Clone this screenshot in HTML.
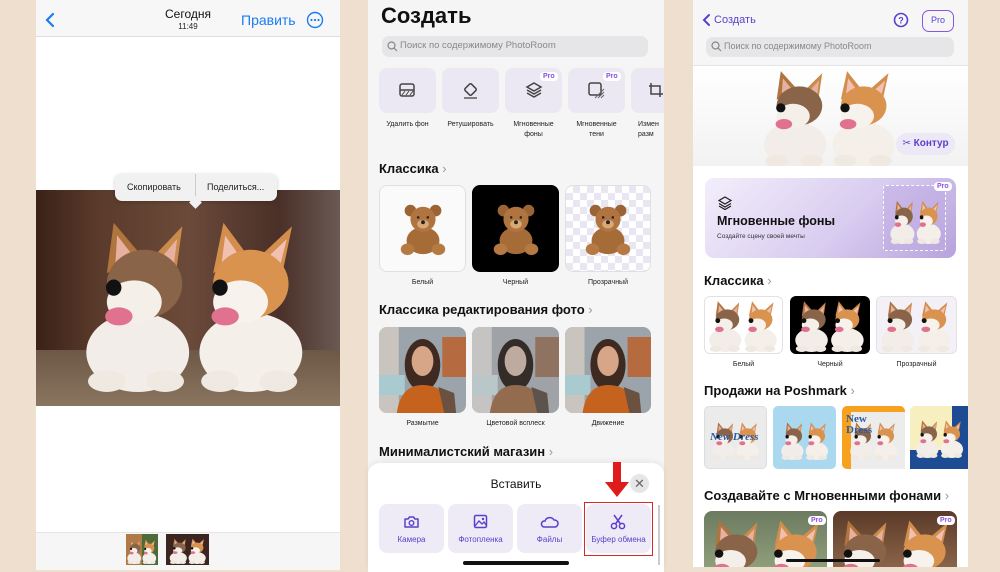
<!DOCTYPE html>
<html style="width:1000px;height:572px;overflow:hidden"><head><meta charset="utf-8">
<style>
*{margin:0;padding:0;box-sizing:border-box}
body{width:1000px;height:572px;background:#efdfcf;position:relative;overflow:hidden;font-family:"Liberation Sans","DejaVu Sans",sans-serif;color:#111}
.a{position:absolute}
.t{position:absolute;white-space:nowrap}
.c{text-align:center}
.tile{position:absolute;border-radius:8px;background:#ebe8f3}
.lbl{position:absolute;font-size:7px;text-align:center;color:#222;line-height:10px}
.h{position:absolute;font-weight:bold;font-size:13px;white-space:nowrap}
.h span{color:#999;font-weight:normal}
.pro{position:absolute;background:#fff;color:#8b4fe0;font-size:7px;font-weight:bold;border-radius:4px;padding:1px 3px}
svg{display:block}
</style></head><body>
<svg width="0" height="0" style="position:absolute">
<defs>
<symbol id="dog" viewBox="0 0 140 100">
 <g>
  <ellipse cx="36" cy="78" rx="30" ry="22" fill="#f2ede8"/>
  <path d="M18 34 L22 6 L38 24 Z" fill="#b0743e"/><path d="M23 28 L24 13 L33 24Z" fill="#e8b0a0"/>
  <path d="M46 24 L62 8 L58 36 Z" fill="#c98a4a"/><path d="M51 24 L59 15 L57 30Z" fill="#e8b0a0"/>
  <ellipse cx="40" cy="40" rx="22" ry="19" fill="#8a6448"/>
  <ellipse cx="34" cy="50" rx="16" ry="12" fill="#f4efe9"/>
  <circle cx="22" cy="42" r="4.5" fill="#111"/>
  <ellipse cx="25" cy="58" rx="8" ry="5" fill="#e0728f"/>
  <ellipse cx="18" cy="94" rx="11" ry="6" fill="#efe9e2"/>
  <ellipse cx="52" cy="94" rx="11" ry="6" fill="#efe9e2"/>
 </g>
 <g transform="translate(62,0)">
  <ellipse cx="40" cy="78" rx="30" ry="22" fill="#f4efe9"/>
  <path d="M18 34 L24 6 L38 24 Z" fill="#d38d4c"/><path d="M23 28 L25 13 L33 24Z" fill="#f0c0b0"/>
  <path d="M46 24 L64 8 L58 36 Z" fill="#d38d4c"/><path d="M51 24 L61 15 L57 30Z" fill="#f0c0b0"/>
  <ellipse cx="40" cy="40" rx="22" ry="19" fill="#d9934f"/>
  <ellipse cx="34" cy="50" rx="16" ry="12" fill="#f7f2ec"/>
  <circle cx="22" cy="42" r="4.5" fill="#111"/>
  <ellipse cx="25" cy="58" rx="8" ry="5" fill="#e0728f"/>
  <ellipse cx="22" cy="94" rx="11" ry="6" fill="#efe9e2"/>
  <ellipse cx="56" cy="94" rx="11" ry="6" fill="#efe9e2"/>
 </g>
</symbol>
<symbol id="bear" viewBox="0 0 60 60">
 <circle cx="17" cy="12" r="6" fill="#9a6434"/><circle cx="43" cy="12" r="6" fill="#9a6434"/>
 <ellipse cx="30" cy="43" rx="17" ry="14" fill="#a56c38"/>
 <ellipse cx="14" cy="52" rx="7" ry="6" fill="#b57a42"/><ellipse cx="46" cy="52" rx="7" ry="6" fill="#b57a42"/>
 <circle cx="30" cy="21" r="13" fill="#b07440"/>
 <ellipse cx="30" cy="26" rx="6" ry="4.5" fill="#d9a877"/>
 <circle cx="30" cy="24" r="2" fill="#222"/><circle cx="25" cy="19" r="1.3" fill="#222"/><circle cx="35" cy="19" r="1.3" fill="#222"/>
</symbol>
<symbol id="girl" viewBox="0 0 88 86">
 <rect width="88" height="86" fill="#9ba3ab"/>
 <rect x="0" y="0" width="20" height="86" fill="#c9c4be"/>
 <rect x="64" y="10" width="24" height="40" fill="#b66a40"/>
 <rect x="0" y="48" width="26" height="20" fill="#a9cbd0"/>
 <ellipse cx="44" cy="38" rx="18" ry="26" fill="#3e2a20"/>
 <ellipse cx="44" cy="34" rx="11" ry="15" fill="#d7a588"/>
 <path d="M18 86 Q22 58 44 58 Q70 58 72 86Z" fill="#c4621e"/>
 <path d="M60 60 L76 66 L78 86 L66 86Z" fill="#6a5140"/>
</symbol>
</defs></svg>

<!-- LEFT PANEL -->
<div class="a" style="left:36px;top:0;width:304px;height:570px;background:#fff"></div>
<div class="a" style="left:36px;top:0;width:304px;height:37px;background:#f7f7f7;border-bottom:1px solid #ddd"></div>
<svg class="a" style="left:44px;top:12px" width="12" height="16"><path d="M9 2 L3 8 L9 14" stroke="#1a7cf5" stroke-width="2.2" fill="none" stroke-linecap="round"/></svg>
<div class="t" style="left:150px;top:7px;width:76px;text-align:center;font-size:12px;color:#111">Сегодня</div>
<div class="t" style="left:150px;top:22px;width:76px;text-align:center;font-size:8px;color:#222">11:49</div>
<div class="t" style="left:241px;top:12px;font-size:14px;color:#1a7cf5">Править</div>
<svg class="a" style="left:306px;top:11px" width="18" height="18"><circle cx="9" cy="9" r="7.5" stroke="#1a7cf5" stroke-width="1.4" fill="none"/><circle cx="5.5" cy="9" r="1.1" fill="#1a7cf5"/><circle cx="9" cy="9" r="1.1" fill="#1a7cf5"/><circle cx="12.5" cy="9" r="1.1" fill="#1a7cf5"/></svg>
<div class="a" style="left:36px;top:190px;width:304px;height:216px;overflow:hidden;background:linear-gradient(90deg,#3a2218 0%,#5a3a2a 20%,#6b4a3a 50%,#4a3028 80%,#6a5a54 100%)">
 <div class="a" style="left:0;top:160px;width:304px;height:56px;background:linear-gradient(#6d5846,#8a7560)"></div>
 <svg class="a" style="left:40px;top:22px" width="240" height="180" viewBox="0 0 140 100" preserveAspectRatio="none"><use href="#dog"/></svg>
</div>
<div class="a" style="left:115px;top:174px;width:162px;height:27px;background:#f1f1f1;border-radius:7px;box-shadow:0 1px 4px rgba(0,0,0,.2)"></div>
<div class="a" style="left:195px;top:174px;width:1px;height:27px;background:#ccc"></div>
<div class="a" style="left:191px;top:198px;width:9px;height:9px;background:#f1f1f1;transform:rotate(45deg)"></div>
<div class="t" style="left:127px;top:182px;font-size:9px;color:#222">Скопировать</div>
<div class="t" style="left:207px;top:182px;font-size:9px;color:#222">Поделиться...</div>
<div class="a" style="left:36px;top:532px;width:304px;height:38px;background:#f6f6f6;border-top:1px solid #e4e4e4"></div>
<div class="a" style="left:126px;top:534px;width:32px;height:31px;overflow:hidden;background:linear-gradient(90deg,#b07a48 50%,#4d6a38 50%)">
 <svg class="a" style="left:0;top:4px" width="32" height="26" viewBox="0 0 140 100" preserveAspectRatio="none"><use href="#dog"/></svg></div>
<div class="a" style="left:166px;top:534px;width:43px;height:31px;overflow:hidden;background:#3c2520">
 <svg class="a" style="left:2px;top:3px" width="40" height="27" viewBox="0 0 140 100" preserveAspectRatio="none"><use href="#dog"/></svg></div>

<!-- MIDDLE PANEL -->
<div class="a" style="left:368px;top:0;width:296px;height:572px;background:#f5f5f5"></div>
<div class="t" style="left:381px;top:3px;font-size:22px;font-weight:bold">Создать</div>
<div class="a" style="left:382px;top:36px;width:266px;height:21px;background:#e6e6e8;border-radius:7px"></div>
<svg class="a" style="left:387px;top:41px" width="11" height="11"><circle cx="4.5" cy="4.5" r="3.5" stroke="#888" fill="none" stroke-width="1.2"/><path d="M7 7 L10 10" stroke="#888" stroke-width="1.2"/></svg>
<div class="t" style="left:400px;top:40px;font-size:9.5px;color:#888">Поиск по содержимому PhotoRoom</div>
<div class="tile" style="left:379px;top:68px;width:57px;height:45px"></div>
<div class="tile" style="left:442px;top:68px;width:57px;height:45px"></div>
<div class="tile" style="left:505px;top:68px;width:57px;height:45px"></div>
<div class="tile" style="left:568px;top:68px;width:57px;height:45px"></div>
<div class="tile" style="left:631px;top:68px;width:33px;height:45px;border-radius:8px 0 0 8px"></div>
<svg class="a" style="left:398px;top:82px" width="18" height="16"><rect x="2" y="2" width="14" height="12" rx="2" stroke="#444" stroke-width="1.5" fill="none"/><path d="M2 8 H16" stroke="#444" stroke-width="1.5"/><path d="M4 13 L7 9 M8 13 L11 9 M12 13 L15 9" stroke="#444"/></svg>
<svg class="a" style="left:461px;top:82px" width="18" height="18"><rect x="5" y="3" width="9" height="9" rx="1.5" transform="rotate(45 9.5 7.5)" stroke="#444" stroke-width="1.5" fill="none"/><path d="M3 16 H16" stroke="#444" stroke-width="1.3"/></svg>
<svg class="a" style="left:524px;top:80px" width="20" height="20"><path d="M10 3 L17 7 L10 11 L3 7Z" stroke="#444" stroke-width="1.5" fill="none"/><path d="M3 10 L10 14 L17 10 M3 13 L10 17 L17 13" stroke="#444" stroke-width="1.5" fill="none"/></svg>
<svg class="a" style="left:587px;top:81px" width="20" height="20"><rect x="2" y="2" width="12" height="12" rx="2" stroke="#444" stroke-width="1.5" fill="none"/><path d="M8 17 L17 8 M11 17 L17 11 M14 17 L17 14" stroke="#666"/></svg>
<svg class="a" style="left:648px;top:82px" width="16" height="16"><path d="M3 1 V12 H15 M1 4 H12 V15" stroke="#444" stroke-width="1.5" fill="none"/></svg>
<div class="pro" style="left:540px;top:72px">Pro</div>
<div class="pro" style="left:603px;top:72px">Pro</div>
<div class="lbl" style="left:379px;top:120px;width:57px">Удалить фон</div>
<div class="lbl" style="left:442px;top:120px;width:57px">Ретушировать</div>
<div class="lbl" style="left:502px;top:120px;width:63px">Мгновенные<br>фоны</div>
<div class="lbl" style="left:565px;top:120px;width:63px">Мгновенные<br>тени</div>
<div class="lbl" style="left:638px;top:120px;width:26px;text-align:left;overflow:hidden">Измен<br>разм</div>
<div class="h" style="left:379px;top:161px">Классика <span>›</span></div>
<div class="a" style="left:379px;top:185px;width:87px;height:87px;background:#fafafa;border:1px solid #e0e0e0;border-radius:8px"></div>
<div class="a" style="left:472px;top:185px;width:87px;height:87px;background:#000;border-radius:8px"></div>
<div class="a" style="left:565px;top:185px;width:86px;height:87px;border:1px solid #e0e0e0;border-radius:8px;background-color:#fff;background-image:linear-gradient(45deg,#e8e6f0 25%,transparent 25%,transparent 75%,#e8e6f0 75%),linear-gradient(45deg,#e8e6f0 25%,transparent 25%,transparent 75%,#e8e6f0 75%);background-size:14px 14px;background-position:0 0,7px 7px"></div>
<svg class="a" style="left:394px;top:198px" width="58" height="60"><use href="#bear"/></svg>
<svg class="a" style="left:487px;top:198px" width="58" height="60"><use href="#bear"/></svg>
<svg class="a" style="left:579px;top:198px" width="58" height="60"><use href="#bear"/></svg>
<div class="lbl" style="left:379px;top:278px;width:87px">Белый</div>
<div class="lbl" style="left:472px;top:278px;width:87px">Черный</div>
<div class="lbl" style="left:565px;top:278px;width:86px">Прозрачный</div>
<div class="h" style="left:379px;top:302px">Классика редактирования фото <span>›</span></div>
<svg class="a" style="left:379px;top:327px;border-radius:8px;overflow:hidden" width="87" height="86" viewBox="0 0 88 86" preserveAspectRatio="none"><use href="#girl"/></svg>
<svg class="a" style="left:472px;top:327px;border-radius:8px;overflow:hidden;filter:grayscale(.6)" width="87" height="86" viewBox="0 0 88 86" preserveAspectRatio="none"><use href="#girl"/></svg>
<svg class="a" style="left:565px;top:327px;border-radius:8px;overflow:hidden" width="86" height="86" viewBox="0 0 88 86" preserveAspectRatio="none"><use href="#girl"/></svg>
<div class="lbl" style="left:379px;top:419px;width:87px">Размытие</div>
<div class="lbl" style="left:472px;top:419px;width:87px">Цветовой всплеск</div>
<div class="lbl" style="left:565px;top:419px;width:86px">Движение</div>
<div class="h" style="left:379px;top:444px">Минималистский магазин <span>›</span></div>
<div class="a" style="left:368px;top:463px;width:296px;height:109px;background:#fff;border-radius:12px 12px 0 0;box-shadow:0 -2px 6px rgba(0,0,0,.06)"></div>
<div class="t" style="left:368px;top:477px;width:296px;text-align:center;font-size:12px;color:#111">Вставить</div>
<div class="a" style="left:630px;top:474px;width:19px;height:19px;border-radius:50%;background:#e6e6e6;color:#666;font-size:13px;text-align:center;line-height:19px">✕</div>
<div class="tile" style="left:379px;top:504px;width:65px;height:49px;background:#eeebf7"></div>
<div class="tile" style="left:448px;top:504px;width:65px;height:49px;background:#eeebf7"></div>
<div class="tile" style="left:517px;top:504px;width:65px;height:49px;background:#eeebf7"></div>
<div class="tile" style="left:586px;top:504px;width:65px;height:49px;background:#eeebf7"></div>
<div class="a" style="left:584px;top:502px;width:69px;height:54px;border:1.5px solid #d42a2a"></div>
<svg class="a" style="left:403px;top:515px" width="17" height="14"><path d="M2 4 H5 L6.5 2 H10.5 L12 4 H15 V12 H2Z" stroke="#5b3fcc" stroke-width="1.5" fill="none" stroke-linejoin="round"/><circle cx="8.5" cy="8" r="2.3" stroke="#5b3fcc" stroke-width="1.4" fill="none"/></svg>
<svg class="a" style="left:473px;top:514px" width="15" height="15"><rect x="1.5" y="1.5" width="12" height="12" rx="1.5" stroke="#5b3fcc" stroke-width="1.5" fill="none"/><path d="M2 12 L6 7 L9 10 L11 8 L13 11" stroke="#5b3fcc" stroke-width="1.3" fill="none"/><circle cx="10" cy="5" r="1.2" fill="#5b3fcc"/></svg>
<svg class="a" style="left:540px;top:516px" width="19" height="12"><path d="M4 11 H15 A3.5 3.5 0 0 0 14 4 A5 5 0 0 0 5 5 A3 3 0 0 0 4 11Z" stroke="#5b3fcc" stroke-width="1.5" fill="none"/></svg>
<svg class="a" style="left:610px;top:514px" width="16" height="16"><circle cx="4" cy="12" r="2.6" stroke="#5b3fcc" stroke-width="1.5" fill="none"/><circle cx="12" cy="12" r="2.6" stroke="#5b3fcc" stroke-width="1.5" fill="none"/><path d="M5.5 10 L12 1 M10.5 10 L4 1" stroke="#5b3fcc" stroke-width="1.5"/></svg>
<div class="t c" style="left:379px;top:535px;width:65px;font-size:8px;color:#5b3fcc">Камера</div>
<div class="t c" style="left:448px;top:535px;width:65px;font-size:8px;color:#5b3fcc">Фотопленка</div>
<div class="t c" style="left:517px;top:535px;width:65px;font-size:8px;color:#5b3fcc">Файлы</div>
<div class="t c" style="left:586px;top:535px;width:65px;font-size:8px;color:#5b3fcc">Буфер обмена</div>
<svg class="a" style="left:604px;top:462px" width="26" height="36"><path d="M9 0 H17 V20 H25 L13 35 L1 20 H9Z" fill="#e01b1b"/></svg>
<div class="a" style="left:463px;top:561px;width:106px;height:4px;border-radius:2px;background:#111"></div>
<div class="a" style="left:658px;top:505px;width:2px;height:60px;background:#ccc"></div>

<!-- RIGHT PANEL -->
<div class="a" style="left:693px;top:0;width:275px;height:567px;background:#fff"></div>
<div class="a" style="left:693px;top:0;width:275px;height:66px;background:#f6f6f6;border-bottom:1px solid #e6e6e6"></div>
<svg class="a" style="left:701px;top:13px" width="10" height="14"><path d="M8 2 L3 7 L8 12" stroke="#5b3fcc" stroke-width="2" fill="none" stroke-linecap="round"/></svg>
<div class="t" style="left:714px;top:14px;font-size:11px;color:#5b3fcc">Создать</div>
<svg class="a" style="left:893px;top:12px" width="16" height="16"><circle cx="8" cy="8" r="6.5" stroke="#5b3fcc" stroke-width="1.6" fill="none"/><text x="8" y="11.5" font-size="9" font-weight="bold" text-anchor="middle" fill="#5b3fcc" font-family="Liberation Sans">?</text></svg>
<div class="a" style="left:922px;top:10px;width:32px;height:22px;border:1.5px solid #8a55e0;border-radius:7px;color:#5b3fcc;font-size:9px;text-align:center;line-height:19px">Pro</div>
<div class="a" style="left:706px;top:37px;width:248px;height:20px;background:#e6e6e8;border-radius:7px"></div>
<svg class="a" style="left:711px;top:41px" width="11" height="11"><circle cx="4.5" cy="4.5" r="3.5" stroke="#888" fill="none" stroke-width="1.2"/><path d="M7 7 L10 10" stroke="#888" stroke-width="1.2"/></svg>
<div class="t" style="left:724px;top:41px;font-size:9px;color:#888">Поиск по содержимому PhotoRoom</div>
<div class="a" style="left:693px;top:67px;width:275px;height:99px;overflow:hidden;background:linear-gradient(#ffffff,#f2f2f2)">
 <svg class="a" style="left:65px;top:-2px" width="145" height="102" viewBox="0 0 140 100" preserveAspectRatio="none"><use href="#dog"/></svg>
</div>
<div class="a" style="left:896px;top:133px;width:59px;height:22px;border-radius:11px;background:#ece8f6;color:#5b3fcc;font-size:10px;font-weight:bold;line-height:22px;text-align:center">✂ Контур</div>
<div class="a" style="left:705px;top:178px;width:251px;height:80px;border-radius:9px;background:linear-gradient(135deg,#f3eefb 0%,#d9cdf0 55%,#b7a2dc 100%)"></div>
<svg class="a" style="left:718px;top:196px" width="14" height="14"><path d="M7 1 L13 4.5 L7 8 L1 4.5Z" stroke="#222" stroke-width="1.3" fill="none"/><path d="M1 7.5 L7 11 L13 7.5 M1 10 L7 13.5 L13 10" stroke="#222" stroke-width="1.3" fill="none"/></svg>
<div class="t" style="left:717px;top:214px;font-size:12.5px;font-weight:bold;color:#111">Мгновенные фоны</div>
<div class="t" style="left:717px;top:233px;font-size:6.5px;color:#333">Создайте сцену своей мечты</div>
<div class="a" style="left:883px;top:185px;width:63px;height:66px;border:1px dashed #fff;border-radius:3px;background:rgba(190,170,225,.5)"></div>
<svg class="a" style="left:888px;top:198px" width="56" height="46" viewBox="0 0 140 100" preserveAspectRatio="none"><use href="#dog"/></svg>
<div class="pro" style="left:934px;top:182px">Pro</div>
<div class="h" style="left:704px;top:273px">Классика <span>›</span></div>
<div class="a" style="left:704px;top:296px;width:79px;height:58px;background:#fff;border:1px solid #e2e2e2;border-radius:6px"></div>
<div class="a" style="left:790px;top:296px;width:80px;height:58px;background:#000;border-radius:6px"></div>
<div class="a" style="left:876px;top:296px;width:81px;height:58px;background:#f3f1f7;border:1px solid #e2e2e2;border-radius:6px"></div>
<svg class="a" style="left:706px;top:298px" width="75" height="54" viewBox="0 0 140 100" preserveAspectRatio="none"><use href="#dog"/></svg>
<svg class="a" style="left:792px;top:298px" width="76" height="54" viewBox="0 0 140 100" preserveAspectRatio="none"><use href="#dog"/></svg>
<svg class="a" style="left:878px;top:298px" width="77" height="54" viewBox="0 0 140 100" preserveAspectRatio="none"><use href="#dog"/></svg>
<div class="lbl" style="left:704px;top:360px;width:79px">Белый</div>
<div class="lbl" style="left:790px;top:360px;width:80px">Черный</div>
<div class="lbl" style="left:876px;top:360px;width:81px">Прозрачный</div>
<div class="h" style="left:704px;top:383px">Продажи на Poshmark <span>›</span></div>
<div class="a" style="left:704px;top:406px;width:63px;height:63px;background:#ebebeb;border:1px solid #ddd;border-radius:5px"></div>
<div class="a" style="left:773px;top:406px;width:63px;height:63px;background:#a9d8ef;border-radius:5px"></div>
<div class="a" style="left:842px;top:406px;width:63px;height:63px;background:#f6a21e;border-radius:5px"></div>
<div class="a" style="left:851px;top:412px;width:54px;height:57px;background:#ececec"></div>
<div class="a" style="left:910px;top:406px;width:58px;height:63px;background:#f7efbf;border-radius:5px 0 0 5px"></div>
<div class="a" style="left:952px;top:406px;width:16px;height:63px;background:#1e4c94"></div>
<div class="a" style="left:910px;top:450px;width:58px;height:19px;background:#1e4c94"></div>
<svg class="a" style="left:710px;top:420px" width="52" height="40" viewBox="0 0 140 100" preserveAspectRatio="none"><use href="#dog"/></svg>
<svg class="a" style="left:779px;top:420px" width="52" height="40" viewBox="0 0 140 100" preserveAspectRatio="none"><use href="#dog"/></svg>
<svg class="a" style="left:848px;top:420px" width="52" height="40" viewBox="0 0 140 100" preserveAspectRatio="none"><use href="#dog"/></svg>
<svg class="a" style="left:914px;top:418px" width="52" height="40" viewBox="0 0 140 100" preserveAspectRatio="none"><use href="#dog"/></svg>
<div class="t" style="left:710px;top:431px;font-size:11px;font-style:italic;font-weight:bold;color:#2c5aa0;font-family:'Liberation Serif',serif">New Dress</div>
<div class="t" style="left:846px;top:414px;font-size:11px;font-weight:bold;color:#2c5aa0;font-family:'Liberation Serif',serif;line-height:11px">New<br>Dress</div>
<div class="h" style="left:704px;top:488px">Создавайте с Мгновенными фонами <span>›</span></div>
<div class="a" style="left:704px;top:511px;width:123px;height:56px;border-radius:8px 8px 0 0;background:linear-gradient(#6c7a60,#8f9e7a);overflow:hidden">
 <svg class="a" style="left:-6px;top:4px" width="134" height="92" viewBox="0 0 140 100" preserveAspectRatio="none"><use href="#dog"/></svg></div>
<div class="a" style="left:833px;top:511px;width:124px;height:56px;border-radius:8px 8px 0 0;background:linear-gradient(#5a3a28,#8a6448);overflow:hidden">
 <svg class="a" style="left:-6px;top:4px" width="134" height="92" viewBox="0 0 140 100" preserveAspectRatio="none"><use href="#dog"/></svg></div>
<div class="pro" style="left:808px;top:516px">Pro</div>
<div class="pro" style="left:937px;top:516px">Pro</div>
<div class="a" style="left:786px;top:559px;width:94px;height:3px;border-radius:2px;background:#111"></div>
</body></html>
